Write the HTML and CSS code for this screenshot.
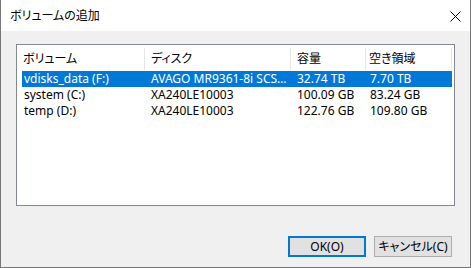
FILE: index.html
```html
<!DOCTYPE html>
<html lang="ja">
<head>
<meta charset="utf-8">
<title>ボリュームの追加</title>
<link rel="stylesheet" href="styles.css">
</head>
<body>
<div class="window">
  <div class="titlebar">
    <span class="title">ボリュームの追加</span>
    <svg class="close" width="11" height="11" viewBox="0 0 11 11"><path d="M0.5 0.5 L10.5 10.5 M10.5 0.5 L0.5 10.5" stroke="#000" stroke-width="1" fill="none"/></svg>
  </div>
  <div class="content">
    <div class="listview">
      <div class="header">
        <div class="hcell c1">ボリューム</div>
        <div class="hcell c2">ディスク</div>
        <div class="hcell c3">容量</div>
        <div class="hcell c4">空き領域</div>
      </div>
      <div class="row selected">
        <div class="cell c1">vdisks_data (F:)</div>
        <div class="cell c2">AVAGO MR9361-8i SCS…</div>
        <div class="cell c3">32.74 TB</div>
        <div class="cell c4">7.70 TB</div>
      </div>
      <div class="row">
        <div class="cell c1">system (C:)</div>
        <div class="cell c2">XA240LE10003</div>
        <div class="cell c3">100.09 GB</div>
        <div class="cell c4">83.24 GB</div>
      </div>
      <div class="row">
        <div class="cell c1">temp (D:)</div>
        <div class="cell c2">XA240LE10003</div>
        <div class="cell c3">122.76 GB</div>
        <div class="cell c4">109.80 GB</div>
      </div>
    </div>
    <div class="buttons">
      <button class="btn default">OK(O)</button>
      <button class="btn">キャンセル(C)</button>
    </div>
  </div>
</div>
</body>
</html>
```

FILE: styles.css
```css
html, body {
  margin: 0;
  padding: 0;
  background: #f0f0f0;
}
body {
  font-family: "Noto Sans", "Noto Sans CJK JP", sans-serif;
  font-size: 12px;
  font-feature-settings: "palt";
  color: #000;
}
.window {
  width: 471px;
  height: 268px;
  box-sizing: border-box;
  border: 1px solid #777777;
  border-top: none;
  display: flex;
  flex-direction: column;
  background: #f0f0f0;
}
.titlebar {
  height: 31px;
  background: #ffffff;
  display: flex;
  align-items: center;
  padding-left: 9px;
  padding-right: 9px;
  flex: none;
}
.title {
  flex: 1;
  line-height: 16px;
  padding-top: 1px;
}
.close {
  display: block;
  margin-top: 1px;
}
.content {
  flex: 1;
  padding: 13px 15px 0 15px;
  display: flex;
  flex-direction: column;
}
.listview {
  width: 439px;
  height: 162px;
  box-sizing: border-box;
  border: 1px solid #828790;
  background: #ffffff;
}
.header {
  display: flex;
  padding-top: 3px;
  padding-bottom: 1px;
}
.hcell {
  height: 22px;
  line-height: 22px;
  box-sizing: border-box;
  border-right: 1px solid #e5e5e5;
  padding-left: 6px;
  white-space: nowrap;
  overflow: hidden;
}
.hcell.c1 { width: 128px; }
.hcell.c2 { width: 146px; }
.hcell.c3 { width: 75px; }
.hcell.c4 { width: 86px; padding-left: 3px; }
.row {
  display: flex;
  margin-left: 5px;
  width: 430px;
  height: 16px;
  line-height: 16px;
}
.row.selected {
  background: #0078d7;
  color: #ffffff;
}
.cell {
  box-sizing: border-box;
  white-space: nowrap;
  padding-left: 6px;
}
.cell.c1 { width: 123px; padding-left: 2px; }
.cell.c2 { width: 146px; }
.cell.c3 { width: 75px; }
.cell.c4 { width: 86px; padding-left: 4px; }
.buttons {
  margin-top: 30px;
  display: flex;
  justify-content: flex-end;
  gap: 8px;
  padding-right: 3px;
}
.btn {
  width: 78px;
  height: 21px;
  box-sizing: border-box;
  margin: 0;
  padding: 0;
  background: #e1e1e1;
  border: 1px solid #adadad;
  font-family: "Noto Sans", "Noto Sans CJK JP", sans-serif;
  font-feature-settings: "palt";
  font-size: 12px;
  line-height: 17px;
  color: #000;
}
.btn.default {
  border: 2px solid #0078d7;
}
```
